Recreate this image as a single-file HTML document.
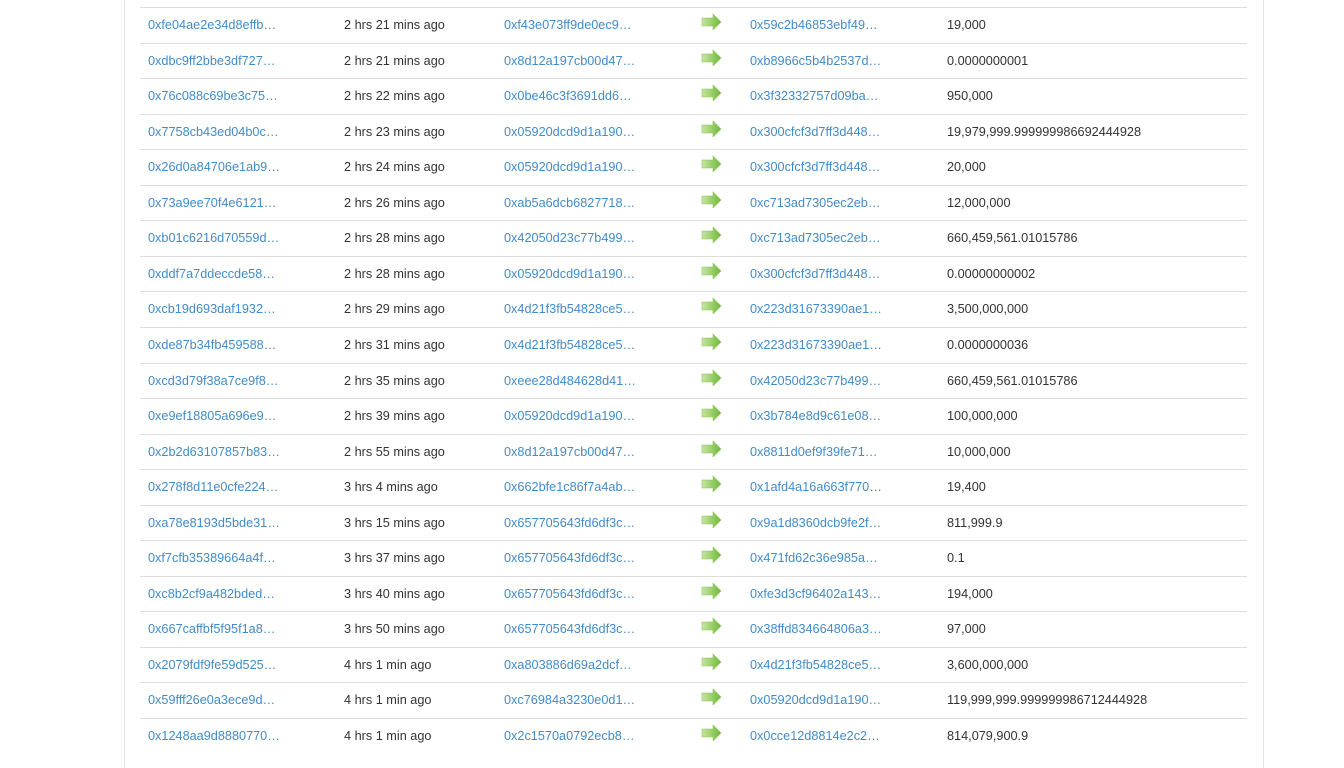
<!DOCTYPE html>
<html><head><meta charset="utf-8"><style>
body{margin:0;background:#fff;width:1344px;height:762px;overflow:hidden;font-family:"Liberation Sans",Arial,sans-serif;font-size:12.7px;color:#333;}
.box{position:absolute;left:124px;top:-2px;width:1138px;height:770px;border-left:1px solid #e5e5e5;border-right:1px solid #e5e5e5;}
.r{position:absolute;left:140px;width:1107px;height:35px;border-top:1px solid #ddd;}
.r span{position:absolute;top:10px;white-space:nowrap}
a{color:#428bca;text-decoration:none}
.c1{left:8px}.c2{left:204px}.c3{left:364px}.c5{left:610px}.c6{left:807px}
</style></head><body><div class="box"></div>
<div id="t"></div>
<script>
var d=[["0xfe04ae2e34d8effb…","2 hrs 21 mins ago","0xf43e073ff9de0ec9…","0x59c2b46853ebf49…","19,000"],
["0xdbc9ff2bbe3df727…","2 hrs 21 mins ago","0x8d12a197cb00d47…","0xb8966c5b4b2537d…","0.0000000001"],
["0x76c088c69be3c75…","2 hrs 22 mins ago","0x0be46c3f3691dd6…","0x3f32332757d09ba…","950,000"],
["0x7758cb43ed04b0c…","2 hrs 23 mins ago","0x05920dcd9d1a190…","0x300cfcf3d7ff3d448…","19,979,999.999999986692444928"],
["0x26d0a84706e1ab9…","2 hrs 24 mins ago","0x05920dcd9d1a190…","0x300cfcf3d7ff3d448…","20,000"],
["0x73a9ee70f4e6121…","2 hrs 26 mins ago","0xab5a6dcb6827718…","0xc713ad7305ec2eb…","12,000,000"],
["0xb01c6216d70559d…","2 hrs 28 mins ago","0x42050d23c77b499…","0xc713ad7305ec2eb…","660,459,561.01015786"],
["0xddf7a7ddeccde58…","2 hrs 28 mins ago","0x05920dcd9d1a190…","0x300cfcf3d7ff3d448…","0.00000000002"],
["0xcb19d693daf1932…","2 hrs 29 mins ago","0x4d21f3fb54828ce5…","0x223d31673390ae1…","3,500,000,000"],
["0xde87b34fb459588…","2 hrs 31 mins ago","0x4d21f3fb54828ce5…","0x223d31673390ae1…","0.0000000036"],
["0xcd3d79f38a7ce9f8…","2 hrs 35 mins ago","0xeee28d484628d41…","0x42050d23c77b499…","660,459,561.01015786"],
["0xe9ef18805a696e9…","2 hrs 39 mins ago","0x05920dcd9d1a190…","0x3b784e8d9c61e08…","100,000,000"],
["0x2b2d63107857b83…","2 hrs 55 mins ago","0x8d12a197cb00d47…","0x8811d0ef9f39fe71…","10,000,000"],
["0x278f8d11e0cfe224…","3 hrs 4 mins ago","0x662bfe1c86f7a4ab…","0x1afd4a16a663f770…","19,400"],
["0xa78e8193d5bde31…","3 hrs 15 mins ago","0x657705643fd6df3c…","0x9a1d8360dcb9fe2f…","811,999.9"],
["0xf7cfb35389664a4f…","3 hrs 37 mins ago","0x657705643fd6df3c…","0x471fd62c36e985a…","0.1"],
["0xc8b2cf9a482bded…","3 hrs 40 mins ago","0x657705643fd6df3c…","0xfe3d3cf96402a143…","194,000"],
["0x667caffbf5f95f1a8…","3 hrs 50 mins ago","0x657705643fd6df3c…","0x38ffd834664806a3…","97,000"],
["0x2079fdf9fe59d525…","4 hrs 1 min ago","0xa803886d69a2dcf…","0x4d21f3fb54828ce5…","3,600,000,000"],
["0x59fff26e0a3ece9d…","4 hrs 1 min ago","0xc76984a3230e0d1…","0x05920dcd9d1a190…","119,999,999.999999986712444928"],
["0x1248aa9d8880770…","4 hrs 1 min ago","0x2c1570a0792ecb8…","0x0cce12d8814e2c2…","814,079,900.9"]];
var h="";
var arrow='<svg style="position:absolute;left:561px;top:4px" width="22" height="18" viewBox="0 0 22 18"><defs><linearGradient id="g" x1="0" x2="1"><stop offset="0" stop-color="#c8e6a0"/><stop offset="1" stop-color="#6fb83a"/></linearGradient></defs><polygon points="1,6 12,6 12,2 20,10 12,18 12,14 1,14" fill="url(#g)" stroke="#8cc65a" stroke-width="0.6"/></svg>';
for(var i=0;i<d.length;i++){var r=d[i];var yy=Math.round(7+i*35.55);
h+='<div class="r" style="top:'+yy+'px"><span class="c1"><a>'+r[0]+'</a></span><span class="c2">'+r[1]+'</span><span class="c3"><a>'+r[2]+'</a></span>'+arrow+'<span class="c5"><a>'+r[3]+'</a></span><span class="c6">'+r[4]+'</span></div>';}
document.getElementById("t").innerHTML=h;
</script></body></html>
